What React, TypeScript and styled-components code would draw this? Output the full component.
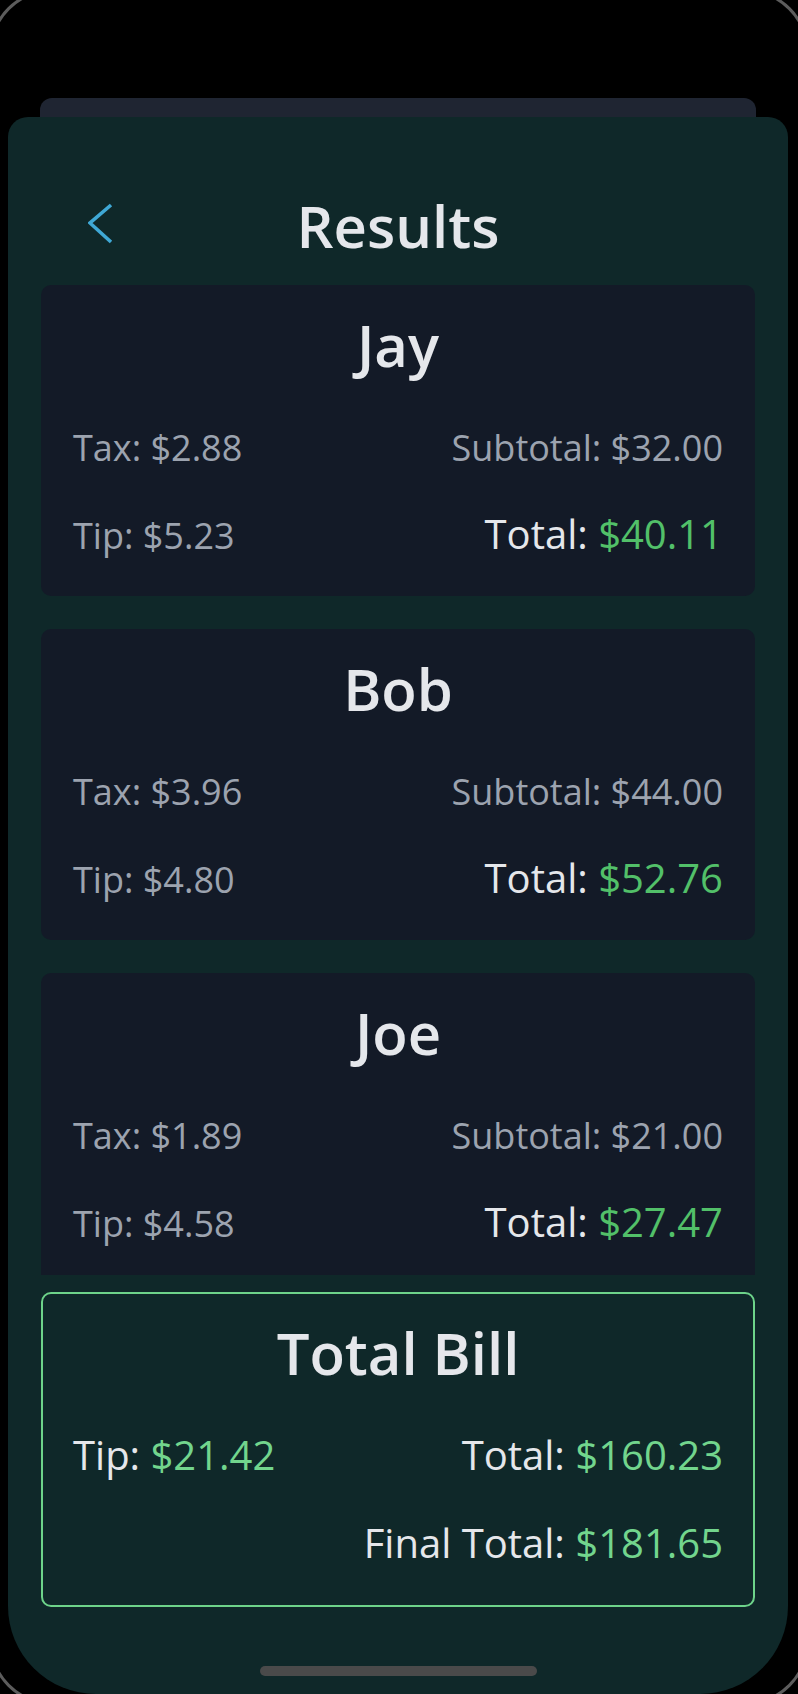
import React from "react";
import styled, { createGlobalStyle } from "styled-components";

const GlobalStyle = createGlobalStyle`
  html, body {
    margin: 0;
    padding: 0;
    background: #000;
    overflow: hidden;
  }
  body {
    font-family: "Open Sans", "Noto Sans", "Liberation Sans", sans-serif;
    -webkit-font-smoothing: antialiased;
  }
`;

const Screen = styled.div`
  position: relative;
  width: 798px;
  height: 1694px;
  background: #000;
  padding-top: 98px;
  box-sizing: border-box;
  display: flex;
  flex-direction: column;
  overflow: hidden;
`;

const Bezel = styled.div`
  position: absolute;
  inset: -10px;
  border: 3px solid #5c5c5c;
  border-radius: 60px;
  pointer-events: none;
`;

const BackSheet = styled.div`
  height: 20px;
  margin: 0 42px 0 40px;
  background: #1f2532;
  border-radius: 12px 12px 0 0;
`;

const Sheet = styled.div`
  flex: 1;
  margin: 0 10px 0 8px;
  background: #0f2829;
  border-radius: 20px 20px 88px 88px;
  padding: 80px 33px 18px;
  display: flex;
  flex-direction: column;
  box-sizing: border-box;
`;

const Header = styled.div`
  display: grid;
  grid-template-columns: 1fr auto 1fr;
  align-items: center;
  height: 58px;
`;

const BackButton = styled.button`
  justify-self: start;
  background: none;
  border: none;
  padding: 0;
  margin-left: 47px;
  margin-top: -4px;
  display: flex;
  cursor: pointer;
`;

const Title = styled.h1`
  margin: 0;
  font-size: 58px;
  line-height: 58px;
  font-weight: 600;
  color: #e5e7eb;
  text-align: center;
`;

const ScrollArea = styled.div`
  height: 1020px;
  overflow: hidden;
  padding-top: 30px;
  box-sizing: border-box;
  display: flex;
  flex-direction: column;
  gap: 33px;
`;

const Card = styled.div<{ $outlined?: boolean }>`
  flex-shrink: 0;
  border-radius: 10px;
  background: ${(p) => (p.$outlined ? "transparent" : "#131a27")};
  border: ${(p) => (p.$outlined ? "2px solid #6dd38a" : "none")};
  padding: ${(p) => (p.$outlined ? "30px 30px 42px" : "31px 32px 40px")};
  display: flex;
  flex-direction: column;
`;

const TotalCard = styled(Card)`
  margin-top: 17px;
`;

const Name = styled.div`
  font-size: 58px;
  line-height: 58px;
  font-weight: 600;
  color: #e5e7eb;
  text-align: center;
  margin-bottom: 54px;
`;

const TotalName = styled(Name)`
  margin-bottom: 53px;
`;

const Rows = styled.div<{ $gap: number }>`
  display: flex;
  flex-direction: column;
  gap: ${(p) => p.$gap}px;
`;

const Row = styled.div`
  display: flex;
  justify-content: space-between;
  align-items: baseline;
  white-space: nowrap;
`;

const Cell = styled.span<{ $tone: "muted" | "light" }>`
  font-size: ${(p) => (p.$tone === "muted" ? 36 : 40)}px;
  line-height: 40px;
  color: ${(p) => (p.$tone === "muted" ? "#9ca3af" : "#e5e7eb")};
  &:only-child {
    margin-left: auto;
  }
`;

const Money = styled.span<{ $bright?: boolean }>`
  color: ${(p) => (p.$bright ? "#72d58d" : "#52c069")};
`;

const HomeIndicator = styled.div`
  width: 277px;
  height: 10px;
  border-radius: 5px;
  background: #4a4a4a;
  margin: 59px auto 0;
`;

type Person = { name: string; tax: string; subtotal: string; tip: string; total: string };

const people: Person[] = [
  { name: "Jay", tax: "$2.88", subtotal: "$32.00", tip: "$5.23", total: "$40.11" },
  { name: "Bob", tax: "$3.96", subtotal: "$44.00", tip: "$4.80", total: "$52.76" },
  { name: "Joe", tax: "$1.89", subtotal: "$21.00", tip: "$4.58", total: "$27.47" },
];

const Chevron = () => (
  <svg width="26" height="42" viewBox="0 0 26 42" fill="none">
    <polyline points="23,2 2,20 23,39" stroke="#3fa8d5" strokeWidth="3.6" fill="none" />
  </svg>
);

export default function App() {
  return (
    <>
      <GlobalStyle />
      <Screen>
        <BackSheet />
        <Sheet>
          <Header>
            <BackButton aria-label="Back">
              <Chevron />
            </BackButton>
            <Title>Results</Title>
            <span />
          </Header>
          <ScrollArea>
            {people.map((p) => (
              <Card key={p.name}>
                <Name>{p.name}</Name>
                <Rows $gap={46}>
                  <Row>
                    <Cell $tone="muted">Tax: {p.tax}</Cell>
                    <Cell $tone="muted">Subtotal: {p.subtotal}</Cell>
                  </Row>
                  <Row>
                    <Cell $tone="muted">Tip: {p.tip}</Cell>
                    <Cell $tone="light">
                      Total: <Money>{p.total}</Money>
                    </Cell>
                  </Row>
                </Rows>
              </Card>
            ))}
          </ScrollArea>
          <TotalCard $outlined>
            <TotalName>Total Bill</TotalName>
            <Rows $gap={48}>
              <Row>
                <Cell $tone="light">
                  Tip: <Money $bright>$21.42</Money>
                </Cell>
                <Cell $tone="light">
                  Total: <Money $bright>$160.23</Money>
                </Cell>
              </Row>
              <Row>
                <Cell $tone="light">
                  Final Total: <Money $bright>$181.65</Money>
                </Cell>
              </Row>
            </Rows>
          </TotalCard>
          <HomeIndicator />
        </Sheet>
        <Bezel />
      </Screen>
    </>
  );
}
